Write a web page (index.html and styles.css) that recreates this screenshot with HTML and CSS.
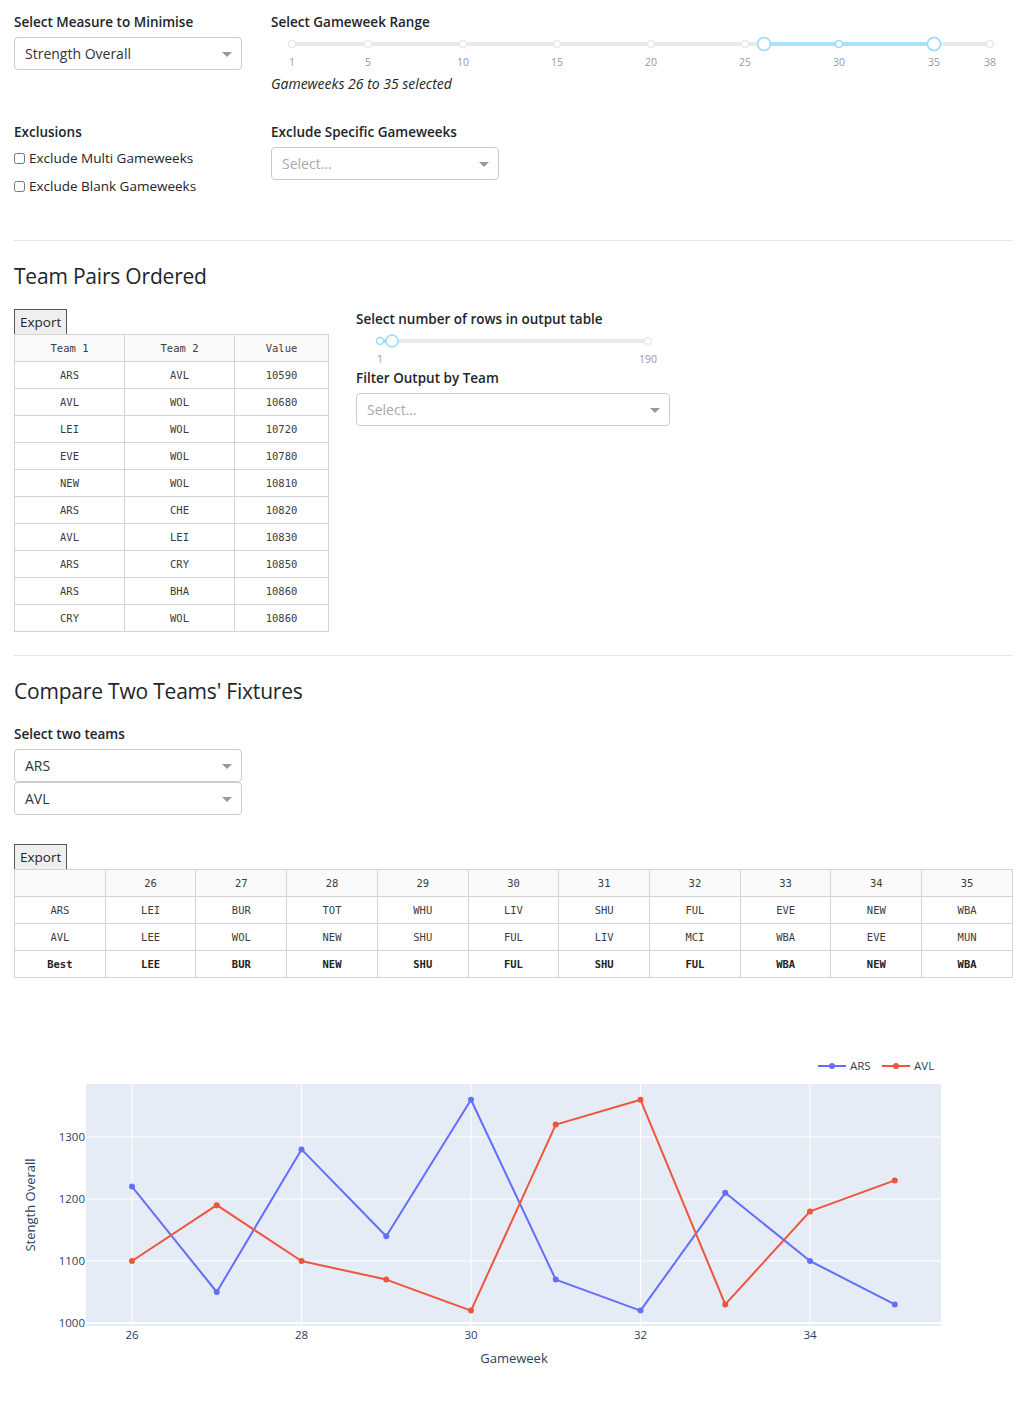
FILE: index.html
```html
<!DOCTYPE html>
<html>
<head>
<meta charset="utf-8">
<link rel="stylesheet" href="styles.css">
</head>
<body>
<div class="page">
  <div class="controls">
    <div class="col">
      <div class="label">Select Measure to Minimise</div>
      <div class="dropdown"><span class="value">Strength Overall</span><span class="caret"></span></div>
    </div>
    <div class="col">
      <div class="label">Select Gameweek Range</div>
      <svg class="slider1" viewBox="271 33 742 40" width="742" height="40">
        <line x1="292" y1="44" x2="990" y2="44" stroke="#e9e9e9" stroke-width="4" stroke-linecap="round"/>
        <line x1="764" y1="44" x2="934" y2="44" stroke="#abe2fb" stroke-width="4"/>
        <g fill="#fff" stroke="#e9e9e9" stroke-width="1.5">
          <circle cx="292" cy="44" r="3.5"/><circle cx="368" cy="44" r="3.5"/><circle cx="463" cy="44" r="3.5"/>
          <circle cx="557" cy="44" r="3.5"/><circle cx="651" cy="44" r="3.5"/><circle cx="745" cy="44" r="3.5"/>
          <circle cx="990" cy="44" r="3.5"/>
          <circle cx="839" cy="44" r="3.5" stroke="#96dbfa"/>
        </g>
        <circle cx="764" cy="44" r="6.5" fill="#fff" stroke="#96dbfa" stroke-width="1.5"/>
        <circle cx="934" cy="44" r="6.5" fill="#fff" stroke="#96dbfa" stroke-width="1.5"/>
        <g class="marks" text-anchor="middle">
          <text x="292" y="66">1</text><text x="368" y="66">5</text><text x="463" y="66">10</text>
          <text x="557" y="66">15</text><text x="651" y="66">20</text><text x="745" y="66">25</text>
          <text x="839" y="66">30</text><text x="934" y="66">35</text><text x="990" y="66">38</text>
        </g>
      </svg>
      <div class="italic">Gameweeks 26 to 35 selected</div>
    </div>
    <div class="col row2">
      <div class="label">Exclusions</div>
      <label class="check"><input type="checkbox">Exclude Multi Gameweeks</label>
      <label class="check"><input type="checkbox">Exclude Blank Gameweeks</label>
    </div>
    <div class="col row2">
      <div class="label">Exclude Specific Gameweeks</div>
      <div class="dropdown"><span class="placeholder">Select...</span><span class="caret"></span></div>
    </div>
  </div>

  <hr class="rule rule1">
  <h3 class="heading">Team Pairs Ordered</h3>

  <div class="pairs">
    <div class="tablecol">
      <button class="export">Export</button>
      <table class="dt pairs-table">
        <thead><tr><th>Team 1</th><th>Team 2</th><th>Value</th></tr></thead>
        <tbody>
          <tr><td>ARS</td><td>AVL</td><td>10590</td></tr>
          <tr><td>AVL</td><td>WOL</td><td>10680</td></tr>
          <tr><td>LEI</td><td>WOL</td><td>10720</td></tr>
          <tr><td>EVE</td><td>WOL</td><td>10780</td></tr>
          <tr><td>NEW</td><td>WOL</td><td>10810</td></tr>
          <tr><td>ARS</td><td>CHE</td><td>10820</td></tr>
          <tr><td>AVL</td><td>LEI</td><td>10830</td></tr>
          <tr><td>ARS</td><td>CRY</td><td>10850</td></tr>
          <tr><td>ARS</td><td>BHA</td><td>10860</td></tr>
          <tr><td>CRY</td><td>WOL</td><td>10860</td></tr>
        </tbody>
      </table>
    </div>
    <div class="sidecol">
      <div class="label">Select number of rows in output table</div>
      <svg class="slider2" viewBox="356 328 314 38" width="314" height="38">
        <line x1="380" y1="339" x2="648" y2="339" stroke="#e9e9e9" stroke-width="4" stroke-linecap="round"/>
        <line x1="380" y1="339" x2="392" y2="339" stroke="#abe2fb" stroke-width="4"/>
        <circle cx="648" cy="339" r="3.5" fill="#fff" stroke="#e9e9e9" stroke-width="1.5"/>
        <circle cx="380" cy="339" r="3.5" fill="#fff" stroke="#96dbfa" stroke-width="1.5"/>
        <circle cx="392" cy="339" r="6" fill="#fff" stroke="#96dbfa" stroke-width="1.5"/>
        <g class="marks" text-anchor="middle">
          <text x="380" y="361">1</text><text x="648" y="361">190</text>
        </g>
      </svg>
      <div class="label">Filter Output by Team</div>
      <div class="dropdown wide"><span class="placeholder">Select...</span><span class="caret"></span></div>
    </div>
  </div>

  <hr class="rule rule2">
  <h3 class="heading">Compare Two Teams' Fixtures</h3>

  <div class="label">Select two teams</div>
  <div class="dropdown"><span class="value">ARS</span><span class="caret"></span></div>
  <div class="dropdown second"><span class="value">AVL</span><span class="caret"></span></div>

  <button class="export export2">Export</button>
  <table class="dt fixtures">
    <thead><tr><th></th><th>26</th><th>27</th><th>28</th><th>29</th><th>30</th><th>31</th><th>32</th><th>33</th><th>34</th><th>35</th></tr></thead>
    <tbody>
      <tr><td>ARS</td><td>LEI</td><td>BUR</td><td>TOT</td><td>WHU</td><td>LIV</td><td>SHU</td><td>FUL</td><td>EVE</td><td>NEW</td><td>WBA</td></tr>
      <tr><td>AVL</td><td>LEE</td><td>WOL</td><td>NEW</td><td>SHU</td><td>FUL</td><td>LIV</td><td>MCI</td><td>WBA</td><td>EVE</td><td>MUN</td></tr>
      <tr class="best"><td>Best</td><td>LEE</td><td>BUR</td><td>NEW</td><td>SHU</td><td>FUL</td><td>SHU</td><td>FUL</td><td>WBA</td><td>NEW</td><td>WBA</td></tr>
    </tbody>
  </table>

  <svg class="chart" viewBox="14 1000 999 400" width="999" height="400">
    <rect x="86" y="1083" width="855" height="242" fill="#e5ecf6"/>
    <g stroke="#fff" stroke-width="1">
      <line x1="86" x2="941" y1="1136" y2="1136"/>
      <line x1="86" x2="941" y1="1198" y2="1198"/>
      <line x1="86" x2="941" y1="1260" y2="1260"/>
      <line x1="132" x2="132" y1="1083" y2="1325"/>
      <line x1="301.5" x2="301.5" y1="1083" y2="1325"/>
      <line x1="471" x2="471" y1="1083" y2="1325"/>
      <line x1="640.5" x2="640.5" y1="1083" y2="1325"/>
      <line x1="810" x2="810" y1="1083" y2="1325"/>
    </g>
    <line x1="86" x2="941" y1="1322" y2="1322" stroke="#fff" stroke-width="2"/>
    <polyline fill="none" stroke="#636efa" stroke-width="2" stroke-linejoin="round"
      points="132,1185.6 216.75,1291 301.5,1148.4 386.25,1235.2 471,1098.8 555.75,1278.6 640.5,1309.6 725.25,1191.8 810,1260 894.75,1303.4"/>
    <polyline fill="none" stroke="#ef553b" stroke-width="2" stroke-linejoin="round"
      points="132,1260 216.75,1204.2 301.5,1260 386.25,1278.6 471,1309.6 555.75,1123.6 640.5,1098.8 725.25,1303.4 810,1210.4 894.75,1179.4"/>
    <g fill="#636efa">
      <circle cx="132" cy="1185.6" r="3"/><circle cx="216.75" cy="1291" r="3"/><circle cx="301.5" cy="1148.4" r="3"/>
      <circle cx="386.25" cy="1235.2" r="3"/><circle cx="471" cy="1098.8" r="3"/><circle cx="555.75" cy="1278.6" r="3"/>
      <circle cx="640.5" cy="1309.6" r="3"/><circle cx="725.25" cy="1191.8" r="3"/><circle cx="810" cy="1260" r="3"/>
      <circle cx="894.75" cy="1303.4" r="3"/>
    </g>
    <g fill="#ef553b">
      <circle cx="132" cy="1260" r="3"/><circle cx="216.75" cy="1204.2" r="3"/><circle cx="301.5" cy="1260" r="3"/>
      <circle cx="386.25" cy="1278.6" r="3"/><circle cx="471" cy="1309.6" r="3"/><circle cx="555.75" cy="1123.6" r="3"/>
      <circle cx="640.5" cy="1098.8" r="3"/><circle cx="725.25" cy="1303.4" r="3"/><circle cx="810" cy="1210.4" r="3"/>
      <circle cx="894.75" cy="1179.4" r="3"/>
    </g>
    <g class="ticks" text-anchor="end">
      <text x="85" y="1326">1000</text><text x="85" y="1264">1100</text>
      <text x="85" y="1202">1200</text><text x="85" y="1140">1300</text>
    </g>
    <g class="ticks" text-anchor="middle">
      <text x="132" y="1338">26</text><text x="301.5" y="1338">28</text><text x="471" y="1338">30</text>
      <text x="640.5" y="1338">32</text><text x="810" y="1338">34</text>
    </g>
    <text class="axis-title" x="514" y="1362" text-anchor="middle">Gameweek</text>
    <text class="axis-title" x="35" y="1204" text-anchor="middle" transform="rotate(-90 35 1204)">Stength Overall</text>
    <g class="legend">
      <line x1="818" x2="846" y1="1065" y2="1065" stroke="#636efa" stroke-width="2"/>
      <circle cx="832" cy="1065" r="3" fill="#636efa"/>
      <text x="850" y="1069">ARS</text>
      <line x1="882" x2="910" y1="1065" y2="1065" stroke="#ef553b" stroke-width="2"/>
      <circle cx="896" cy="1065" r="3" fill="#ef553b"/>
      <text x="914" y="1069">AVL</text>
    </g>
  </svg>
</div>
</body>
</html>
```

FILE: styles.css
```css
* { box-sizing: border-box; }
html, body { margin: 0; padding: 0; background: #fff; }
body {
  font-family: "Open Sans", "Noto Sans", sans-serif;
  font-size: 13.5px;
  color: #212529;
}
.page {
  width: 1036px;
  padding: 12px 23px 0 14px;
}
.controls {
  display: grid;
  grid-template-columns: 257px 742px;
  grid-template-rows: 110px auto;
}
.col { display: flex; flex-direction: column; align-items: flex-start; }
.label {
  font-weight: 600;
  font-size: 13.5px;
  line-height: 21px;
  color: #212529;
}
.dropdown {
  position: relative;
  width: 228px;
  height: 33px;
  margin-top: 4px;
  border: 1px solid #ccc;
  border-radius: 4px;
  background: #fff;
  padding: 0 10px;
  display: flex;
  align-items: center;
  font-size: 14px;
}
.dropdown.wide { width: 314px; }
.dropdown.second { margin-top: 0; }
.dropdown .value { color: #333; }
.dropdown .placeholder { color: #aaa; }
.caret {
  position: absolute;
  right: 9px;
  top: 14px;
  width: 0; height: 0;
  border-style: solid;
  border-width: 5px 5px 0 5px;
  border-color: #999 transparent transparent transparent;
}
.slider1 { display: block; margin-top: 0; }
.marks text { font-family: "Open Sans", sans-serif; font-size: 10.5px; fill: #999; }
.italic { font-style: italic; line-height: 22px; font-size: 14px; margin-top: 0; }
.check {
  display: flex;
  align-items: center;
  height: 28px;
  font-size: 13.5px;
  margin-top: 1px;
}
.check + .check { margin-top: 0; }
.check input { margin: 0 4px 0 0; width: 11px; height: 11px; }
.rule {
  border: 0;
  border-top: 1px solid #e5e5e5;
  margin: 0;
  width: 999px;
}
.rule1 { margin-top: 40px; }
.rule2 { margin-top: 23px; }
.heading {
  font-weight: 500;
  font-size: 21px;
  letter-spacing: -0.2px;
  line-height: 30px;
  margin: 20px 0 18px;
  color: #212529;
}
.pairs { display: flex; gap: 28px; }
.tablecol { width: 314px; }
.sidecol { width: 314px; padding-top: 0; }
.sidecol .label:first-child { margin-top: 0; }
.slider2 { display: block; }
.export {
  display: block;
  font-family: "Open Sans", sans-serif;
  font-size: 13.5px;
  color: #212529;
  background: #efefef;
  border: 1px solid #555;
  border-radius: 0;
  padding: 0 5px;
  height: 26px;
  line-height: 22px;
  margin: 0;
}
.export2 { margin-top: 29px; }
.dt {
  border-collapse: collapse;
  font-family: "DejaVu Sans Mono", "Liberation Mono", monospace;
  font-size: 10.5px;
  color: #3c3c3c;
  margin-top: -1px;
  table-layout: fixed;
}
.dt th, .dt td {
  border: 1px solid #d3d3d3;
  height: 27px;
  text-align: center;
  font-weight: normal;
  padding: 0 6px;
}
.dt th { background: #fafafa; color: #3c3c3c; }
.pairs-table { width: 315px; }
.pairs-table th:nth-child(1), .pairs-table th:nth-child(2) { width: 110px; }
.fixtures { width: 999px; }
.fixtures .best td { font-weight: bold; color: #222; }
.chart { display: block; margin-top: 23px; }
.ticks text { font-family: "Open Sans", sans-serif; font-size: 11.5px; fill: #2a3f5f; }
.axis-title { font-family: "Open Sans", sans-serif; font-size: 13px; fill: #2a3f5f; }
.legend text { font-family: "Open Sans", sans-serif; font-size: 11.5px; fill: #2a3f5f; }
```
